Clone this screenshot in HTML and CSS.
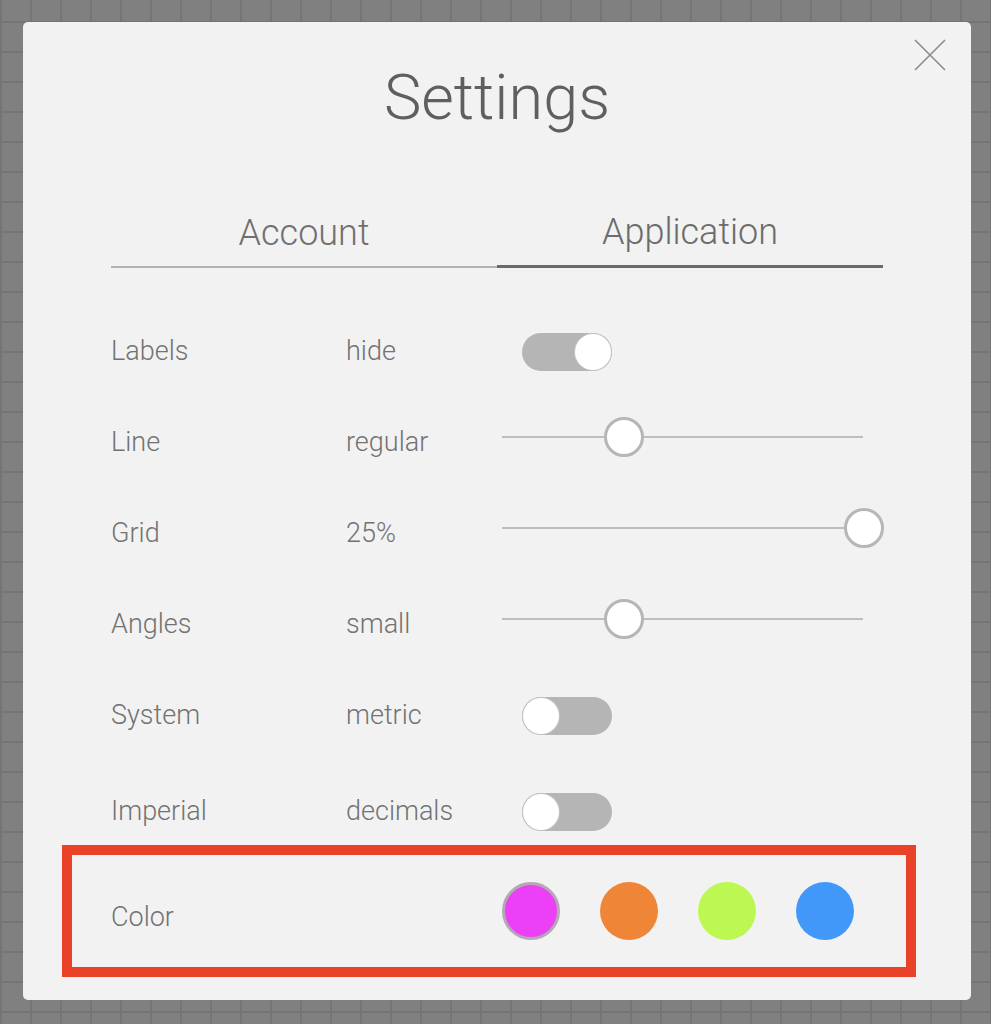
FILE: index.html
```html
<!DOCTYPE html>
<html>
<head>
<meta charset="utf-8">
<title>Settings</title>
<link rel="stylesheet" href="styles.css">
</head>
<body>
<div class="dialog">
  <button class="close" aria-label="Close">
    <svg width="32" height="32" viewBox="0 0 32 32"><path d="M1 1 L31 31 M31 1 L1 31" stroke="#8c8c8c" stroke-width="1.6" fill="none"/></svg>
  </button>
  <h1 class="title">Settings</h1>
  <div class="tabs">
    <div class="tab">Account</div>
    <div class="tab tab-active">Application</div>
  </div>
  <div class="rows">
    <div class="row">
      <span class="label">Labels</span><span class="value">hide</span>
      <div class="toggle on"><span class="knob"></span></div>
    </div>
    <div class="row">
      <span class="label">Line</span><span class="value">regular</span>
      <div class="slider"><span class="thumb" style="left:102px"></span></div>
    </div>
    <div class="row">
      <span class="label">Grid</span><span class="value">25%</span>
      <div class="slider"><span class="thumb" style="left:342px"></span></div>
    </div>
    <div class="row">
      <span class="label">Angles</span><span class="value">small</span>
      <div class="slider"><span class="thumb" style="left:102px"></span></div>
    </div>
    <div class="row">
      <span class="label">System</span><span class="value">metric</span>
      <div class="toggle"><span class="knob"></span></div>
    </div>
    <div class="row row-last">
      <span class="label">Imperial</span><span class="value">decimals</span>
      <div class="toggle"><span class="knob"></span></div>
    </div>
  </div>
  <div class="color-box">
    <span class="label color-label">Color</span>
    <div class="swatches">
      <span class="swatch magenta selected"></span>
      <span class="swatch orange"></span>
      <span class="swatch lime"></span>
      <span class="swatch blue"></span>
    </div>
  </div>
</div>
</body>
</html>
```

FILE: styles.css
```css
html, body {
  margin: 0;
  padding: 0;
}
body {
  width: 991px;
  height: 1024px;
  overflow: hidden;
  background-color: #808080;
  background-image:
    linear-gradient(to right, #757575 2px, transparent 2px),
    linear-gradient(to bottom, #757575 2px, transparent 2px);
  background-size: 30px 30px;
  background-position: 30px 21px;
  font-family: Roboto, "Liberation Sans", sans-serif;
  padding-top: 22px;
  box-sizing: border-box;
}
.dialog {
  position: relative;
  margin-left: 23px;
  width: 948px;
  height: 978px;
  background: #f2f2f2;
  border-radius: 5px;
  box-sizing: border-box;
  padding-top: 44px;
}
.close {
  position: absolute;
  top: 17px;
  right: 25px;
  width: 32px;
  height: 32px;
  padding: 0;
  border: 0;
  background: none;
}
.close svg { display: block; }
.title {
  margin: 0;
  font-size: 63px;
  line-height: 1;
  font-weight: 300;
  color: #5f5f5f;
  text-align: center;
}
.tabs {
  display: flex;
  align-items: flex-end;
  margin: 85px 88px 0 88px;
}
.tab {
  flex: 1;
  text-align: center;
  font-size: 36px;
  line-height: 1;
  font-weight: 300;
  color: #707070;
  padding-bottom: 15px;
  border-bottom: 2px solid #b3b3b3;
}
.tab-active {
  padding-bottom: 15px;
  border-bottom: 3px solid #6a6a6a;
  color: #6c6c6c;
}
.rows {
  margin-top: 38px;
  padding-left: 88px;
}
.row {
  display: flex;
  align-items: center;
  height: 91px;
}
.row-last {
  margin-top: 5px;
}
.label {
  width: 235px;
  font-size: 27px;
  line-height: 1;
  font-weight: 300;
  color: #727272;
}
.value {
  width: 156px;
  font-size: 27px;
  line-height: 1;
  font-weight: 300;
  color: #727272;
}
.toggle {
  margin-left: 20px;
  width: 90px;
  height: 38px;
  border-radius: 19px;
  background: #b5b5b5;
  display: flex;
  align-items: center;
  padding: 0 1px;
  box-sizing: border-box;
}
.toggle.on { justify-content: flex-end; }
.knob {
  width: 36px;
  height: 36px;
  border-radius: 50%;
  background: #ffffff;
  box-shadow: 0 0 0 1px #c4c4c4;
}
.slider {
  position: relative;
  width: 361px;
  height: 2px;
  background: #bebebe;
  margin-top: -11px;
}
.thumb {
  position: absolute;
  top: -19px;
  width: 40px;
  height: 40px;
  box-sizing: border-box;
  border: 3px solid #b6b6b6;
  border-radius: 50%;
  background: #ffffff;
}
.color-box {
  display: flex;
  align-items: center;
  margin: -12px 55px 0 39px;
  height: 132px;
  box-sizing: border-box;
  border: 10px solid #ea4129;
  padding-left: 39px;
}
.color-label {
  width: 391px;
  margin-top: 12px;
}
.swatches {
  display: flex;
  gap: 40px;
}
.swatch {
  width: 58px;
  height: 58px;
  border-radius: 50%;
  box-sizing: border-box;
}
.magenta { background: #ec40f7; }
.selected { border: 3px solid #b3a8b3; }
.orange { background: #ef8536; }
.lime { background: #bdf752; }
.blue { background: #4298f8; }
```
